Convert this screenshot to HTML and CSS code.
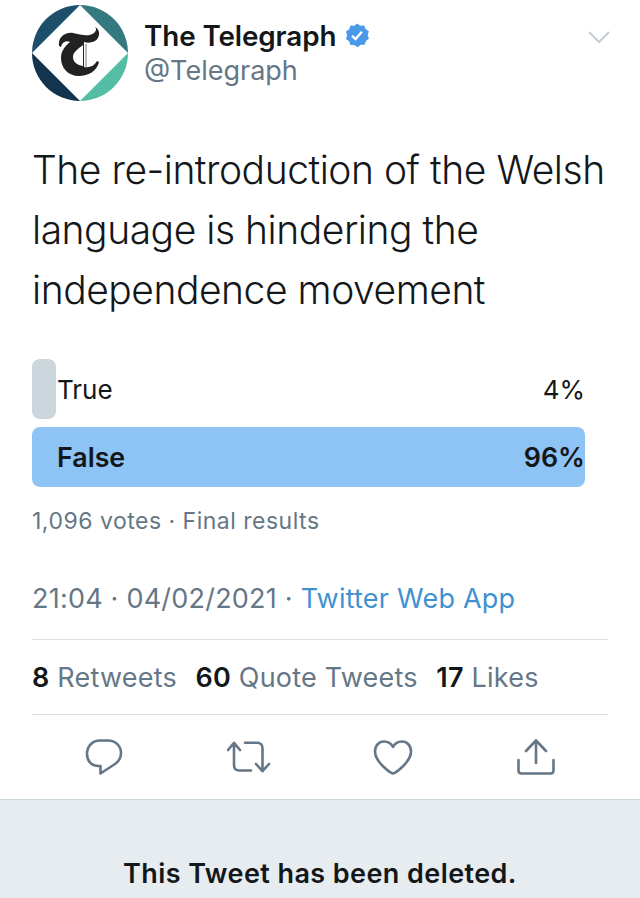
FILE: index.html
```html
<!DOCTYPE html>
<html lang="en">
<head>
<meta charset="utf-8">
<title>Tweet</title>
<link rel="stylesheet" href="styles.css">
</head>
<body>
<main class="tweet">
  <header class="head">
    <svg class="avatar" viewBox="0 0 96 96" aria-label="The Telegraph logo">
      <defs><clipPath id="disc"><circle cx="48" cy="48" r="48"/></clipPath></defs>
      <g clip-path="url(#disc)">
        <rect width="48" height="48" fill="#1d4f6b"/>
        <rect x="48" width="48" height="48" fill="#34797f"/>
        <rect y="48" width="48" height="48" fill="#13344c"/>
        <rect x="48" y="48" width="48" height="48" fill="#55bda5"/>
        <path d="M48 0 96 48 48 96 0 48Z" fill="#fff"/>
      </g>
      <path d="M27 41C26 32 33 27 41 28C49 30 57 32 62 28C64 26 65 24 63 22C69 25 68 33 63 36C59 38 55 38 52 37V62C58 63 62 61 65 56L67 57C65 66 56 71 47 71C36 71 29 63 29 53C29 46 33 41 38 37C34 35 30 37 29 42Z" fill="#222"/>
      <path d="M51 40C46 44 41 47 41 52C41 57 45 60 51 61Z" fill="#fff"/>
      <path d="M54 39V63" stroke="#777" stroke-width="1" fill="none"/>
    </svg>
    <div class="names">
      <div class="name-row">
        <span class="name">The Telegraph</span>
        <svg class="badge" viewBox="0 0 24 24" aria-label="Verified">
          <path d="M12 0.500 15 2.500 18.600 2.300 19.900 5.600 22.900 7.600 21.900 11.100 23 14.500 20.200 16.700 19.100 20.100 15.500 20.100 12.500 22.300 9.500 20.200 5.900 20.300 4.700 16.900 1.800 14.800 2.900 11.300 1.800 7.800 4.800 5.800 6 2.400 9.600 2.500Z" fill="#4a99e9"/>
          <path d="M7.500 11.800 10.600 14.800 16.500 8" stroke="#fff" stroke-width="2.200" fill="none"/>
        </svg>
      </div>
      <div class="handle">@Telegraph</div>
    </div>
    <svg class="chevron" viewBox="0 0 24 14" aria-hidden="true"><path d="M2 2 12 12 22 2" fill="none" stroke="#c5ccd3" stroke-width="2"/></svg>
  </header>

  <p class="text">The re-introduction of the Welsh language is hindering the independence movement</p>

  <section class="poll">
    <div class="option">
      <div class="bar bar-small"></div>
      <span class="label">True</span>
      <span class="pct">4%</span>
    </div>
    <div class="option option-win">
      <div class="bar bar-full"></div>
      <span class="label">False</span>
      <span class="pct">96%</span>
    </div>
    <div class="votes">1,096 votes · Final results</div>
  </section>

  <div class="meta">21:04 · 04/02/2021 · <span class="source">Twitter Web App</span></div>

  <div class="stats">
    <span><b>8</b> Retweets</span>
    <span><b>60</b> Quote Tweets</span>
    <span><b>17</b> Likes</span>
  </div>

  <div class="actions">
    <svg class="icon icon-reply" viewBox="0 0 38 36" aria-label="Reply"><path d="M15.500 34.500V27H13.500C6.500 27 2 22 2 15C2 7 7.500 1.500 15 1.500H23C30.500 1.500 36 7 36 14C36 19.500 33.500 22.500 30 25Z"/></svg>
    <svg class="icon icon-retweet" viewBox="0 0 44 32" aria-label="Retweet"><path d="M1 9 7 1.800 13 9M7 2.200V24C7 27.500 9 29.500 12.500 29.500H24M42 23 35.500 30.200 29 23M35.500 29.800V7C35.500 3.500 33.500 1.800 30 1.800H18"/></svg>
    <svg class="icon icon-heart" viewBox="0 0 40 35" aria-label="Like"><path d="M20 33.500C17.500 33 2 22 2 11.500C2 5.500 6 1.500 11 1.500C15 1.500 18.500 4 20 7C21.500 4 25 1.500 29 1.500C34 1.500 38 5.500 38 11.500C38 22 22.500 33 20 33.500Z"/></svg>
    <svg class="icon icon-share" viewBox="0 0 38 36" aria-label="Share"><path d="M9 12 19 1.500 29 12M19 2V24M1.500 21V31.500C1.500 33.500 2.500 34.500 4.500 34.500H33.500C35.500 34.500 36.500 33.500 36.500 31.500V21"/></svg>
  </div>
</main>
<footer class="deleted">This Tweet has been deleted.</footer>
</body>
</html>
```
FILE: styles.css
```css
* { box-sizing: border-box; }
html, body { margin: 0; padding: 0; }
body {
  width: 640px;
  height: 898px;
  overflow: hidden;
  background: #fff;
  color: #14171a;
  font-family: Inter, "Noto Sans", sans-serif;
}
.tweet { padding: 5px 32px 0; height: 799px; }
.head { display: flex; align-items: flex-start; height: 96px; }
.avatar { width: 96px; height: 96px; flex: none; }
.names { margin-left: 17px; padding-top: 14px; flex: 1; }
.name-row { display: flex; align-items: center; height: 34px; margin-left: -1px; }
.name { font-size: 27.8px; font-weight: 600; letter-spacing: -0.1px; }
.badge { width: 26px; height: 26px; margin-left: 8px; }
.handle { font-size: 27px; color: #657786; line-height: 36px; margin-left: -1px; }
.chevron { width: 24px; height: 14px; margin-top: 25px; margin-right: -3px; }
.text { margin: 39px 0 0; font-size: 39px; font-weight: 300; line-height: 60px; letter-spacing: -0.46px; color: #14171a; width: 576px; }
.poll { margin-top: 39px; width: 553px; }
.option { position: relative; height: 60px; display: flex; align-items: center; justify-content: space-between; padding-left: 25px; font-size: 26px; margin-bottom: 8px; }
.bar { position: absolute; left: 0; top: 0; bottom: 0; border-radius: 8px; }
.bar-small { width: 24px; background: #ccd6dd; }
.bar-full { width: 100%; background: #8ec3f5; }
.label, .pct { position: relative; }
.option-win { font-weight: 600; font-size: 26.8px; }
.votes { margin-top: 19px; font-size: 23px; color: #657786; line-height: 30px; letter-spacing: 0.5px; }
.meta { margin-top: 45px; font-size: 27px; color: #657786; line-height: 36px; letter-spacing: 0.22px; }
.source { color: #3f92cf; }
.stats { margin-top: 22px; width: 576px; height: 76px; border-top: 1px solid #d9dfe3; border-bottom: 1px solid #d9dfe3; display: flex; align-items: center; gap: 18.5px; font-size: 27px; letter-spacing: 0.22px; color: #657786; }
.stats b { font-weight: 600; color: #14171a; }
.actions { display: flex; justify-content: space-between; align-items: center; padding: 24px 53px 0; width: 576px; height: 60px; }
.icon { flex: none; fill: none; stroke: #657786; stroke-width: 2.6; stroke-linejoin: round; stroke-linecap: round; }
.icon-reply { width: 38px; height: 36px; }
.icon-retweet { width: 44px; height: 32px; }
.icon-heart { width: 40px; height: 35px; margin-left: -1px; }
.icon-share { width: 38px; height: 36px; }
.deleted { height: 99px; background: #e6ecf0; border-top: 1px solid #ccd6dd; text-align: center; font-size: 27px; font-weight: 600; padding-top: 57px; line-height: 34px; letter-spacing: 0.42px; }
```
